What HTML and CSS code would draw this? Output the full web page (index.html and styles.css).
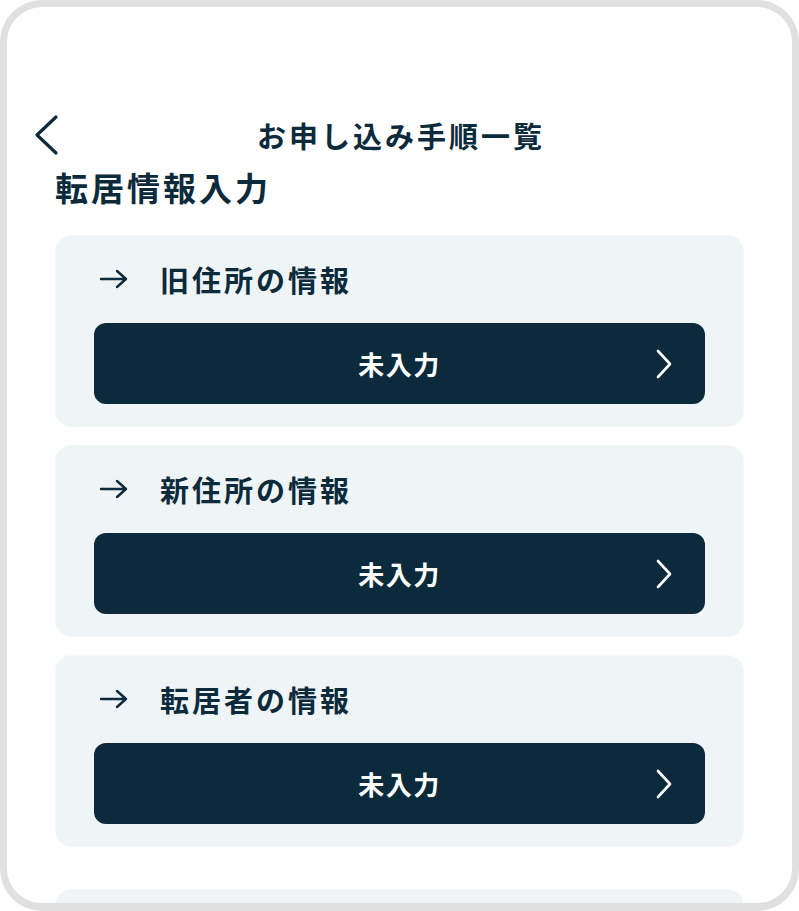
FILE: index.html
```html
<!DOCTYPE html>
<html lang="ja">
<head>
    <meta charset="UTF-8">
    <meta name="viewport" content="width=device-width, initial-scale=1.0">
    <title>お申し込み手順一覧</title>
    <link rel="stylesheet" href="styles.css">
</head>
<body>
    <div class="frame">
        <header class="top-bar">
            <button class="back-btn" aria-label="戻る">
                <svg width="26" height="42" viewBox="0 0 26 42">
                    <path d="M23 3 L4 21 L23 39" fill="none" stroke="#0b2a3b" stroke-width="3.2" stroke-linecap="round" stroke-linejoin="round"/>
                </svg>
            </button>
            <h1>お申し込み手順一覧</h1>
            <span></span>
        </header>

        <main class="content">
            <h2 class="section-title">転居情報入力</h2>

            <div class="step-card">
                <div class="step-head">
                    <svg class="arrow" width="30" height="20" viewBox="0 0 30 20">
                        <path d="M2 10 H27 M18 2 L27 10 L18 18" fill="none" stroke="#0b2a3b" stroke-width="2.4" stroke-linecap="round" stroke-linejoin="round"/>
                    </svg>
                    <span>旧住所の情報</span>
                </div>
                <button class="step-btn">
                    <span>未入力</span>
                    <svg class="chev" width="18" height="30" viewBox="0 0 18 30">
                        <path d="M3 2 L15 15 L3 28" fill="none" stroke="#fff" stroke-width="2.6" stroke-linecap="round" stroke-linejoin="round"/>
                    </svg>
                </button>
            </div>

            <div class="step-card">
                <div class="step-head">
                    <svg class="arrow" width="30" height="20" viewBox="0 0 30 20">
                        <path d="M2 10 H27 M18 2 L27 10 L18 18" fill="none" stroke="#0b2a3b" stroke-width="2.4" stroke-linecap="round" stroke-linejoin="round"/>
                    </svg>
                    <span>新住所の情報</span>
                </div>
                <button class="step-btn">
                    <span>未入力</span>
                    <svg class="chev" width="18" height="30" viewBox="0 0 18 30">
                        <path d="M3 2 L15 15 L3 28" fill="none" stroke="#fff" stroke-width="2.6" stroke-linecap="round" stroke-linejoin="round"/>
                    </svg>
                </button>
            </div>

            <div class="step-card">
                <div class="step-head">
                    <svg class="arrow" width="30" height="20" viewBox="0 0 30 20">
                        <path d="M2 10 H27 M18 2 L27 10 L18 18" fill="none" stroke="#0b2a3b" stroke-width="2.4" stroke-linecap="round" stroke-linejoin="round"/>
                    </svg>
                    <span>転居者の情報</span>
                </div>
                <button class="step-btn">
                    <span>未入力</span>
                    <svg class="chev" width="18" height="30" viewBox="0 0 18 30">
                        <path d="M3 2 L15 15 L3 28" fill="none" stroke="#fff" stroke-width="2.6" stroke-linecap="round" stroke-linejoin="round"/>
                    </svg>
                </button>
            </div>

            <div class="step-card disabled"></div>
        </main>
    </div>
</body>
</html>
```

FILE: styles.css
```css
* {
    box-sizing: border-box;
}

body {
    margin: 0;
    background-color: #ffffff;
    font-family: "Noto Sans CJK JP", "Noto Sans", sans-serif;
    color: #0b2a3b;
}

.frame {
    width: 799px;
    height: 911px;
    border: 7px solid #e0e0e0;
    border-bottom-width: 8px;
    border-radius: 42px;
    background-color: #ffffff;
    overflow: hidden;
}

.top-bar {
    display: grid;
    grid-template-columns: 1fr auto 1fr;
    align-items: center;
    height: 44px;
    margin-top: 106px;
    padding: 0 26px;
}

.back-btn {
    justify-self: start;
    background: none;
    border: none;
    padding: 0;
    display: flex;
    cursor: pointer;
}

.top-bar h1 {
    margin: 0;
    font-size: 29px;
    font-weight: 700;
    letter-spacing: 3px;
    line-height: 44px;
    padding-left: 3px;
}

.content {
    padding: 0 48px;
}

.section-title {
    margin: 12px 0 30px;
    font-size: 33px;
    font-weight: 700;
    line-height: 36px;
    letter-spacing: 3px;
}

.step-card {
    background-color: #eff4f7;
    border: 1px solid #f5f8fa;
    border-radius: 16px;
    padding: 25px 38px 22px;
    margin-bottom: 18px;
}

.step-card.disabled {
    background-color: #f1f3f4;
    height: 120px;
    margin-top: 42px;
}

.step-head {
    display: flex;
    align-items: center;
    height: 36px;
    padding-left: 5px;
    font-size: 29px;
    font-weight: 700;
    letter-spacing: 3px;
}

.step-head .arrow {
    margin-right: 31px;
}

.step-btn {
    position: relative;
    display: flex;
    align-items: center;
    justify-content: center;
    width: 100%;
    height: 81px;
    margin-top: 26px;
    border: none;
    border-radius: 12px;
    background-color: #0b2a3b;
    color: #ffffff;
    font-family: inherit;
    font-size: 26px;
    font-weight: 700;
    letter-spacing: 1.5px;
    cursor: pointer;
}

.step-btn .chev {
    position: absolute;
    right: 32px;
    top: 26px;
}
```
